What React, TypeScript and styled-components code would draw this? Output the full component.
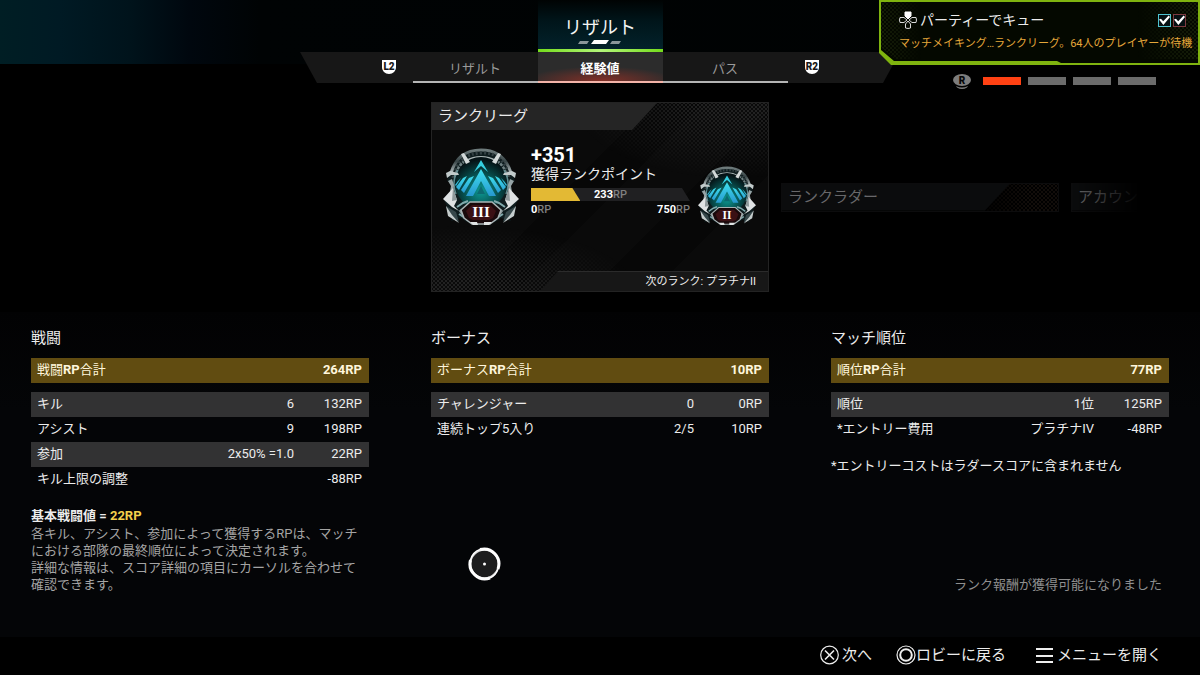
import React, { useState } from "react";
import styled, { createGlobalStyle, css } from "styled-components";

const GlobalStyle = createGlobalStyle`
  *, *::before, *::after { box-sizing: border-box; }
  body {
    margin: 0;
    background: #000;
    color: #ececec;
    font-family: Roboto, "Noto Sans CJK JP", sans-serif;
    font-size: 13px;
    line-height: 18px;
  }
  button {
    margin: 0;
    padding: 0;
    border: 0;
    background: none;
    color: inherit;
    font: inherit;
    cursor: pointer;
  }
  h1, h2, p { margin: 0; font-weight: 400; }
  svg { display: block; }
`;

const halftone = (color: string) => css`
  background-image: radial-gradient(circle, ${color} 1px, transparent 1px),
    radial-gradient(circle, ${color} 1px, transparent 1px);
  background-size: 4px 4px;
  background-position: 0 0, 2px 2px;
`;

const Screen = styled.div`
  position: relative;
  display: flex;
  flex-direction: column;
  min-height: 100vh;
  overflow: hidden;
`;

/* ---------- header ---------- */

const Header = styled.header`
  display: grid;
  grid-template-columns: minmax(0, 1fr) 600px minmax(0, 1fr);
  min-height: 90px;
  background: linear-gradient(90deg, #001e24 0, #001a24 60px, #00131b 130px, #00070e 190px, #000304 260px, #000202 100%)
    top / 100% 64px no-repeat;
`;

const HeaderCentre = styled.div`
  grid-column: 2;
  display: flex;
  flex-direction: column;
  align-items: center;
`;

const TitleBlock = styled.div`
  display: flex;
  flex-direction: column;
  align-items: center;
  justify-content: flex-end;
  gap: 2px;
  width: 125px;
  height: 52px;
  background: linear-gradient(180deg, #000303 0, #00151a 40%, #03232c 100%);

  &::after {
    content: "";
    width: 100%;
    height: 3px;
    margin-top: 3px;
    background: linear-gradient(90deg, #74dc1c, #b4f47a 50%, #74dc1c);
  }
`;

const Title = styled.h1`
  font-size: 18px;
  line-height: 20px;
  color: #f4f4f4;
`;

const TabBar = styled.nav`
  display: flex;
  align-items: center;
  justify-content: center;
  gap: 16px;
  width: 100%;
  height: 31px;
  background: #171717;
  clip-path: polygon(0 0, 100% 0, calc(100% - 17px) 100%, 17px 100%);
`;

const Tabs = styled.div`
  display: flex;
  height: 100%;
`;

const Tab = styled.button<{ $active: boolean }>`
  width: 125px;
  padding-top: 4px;
  border-bottom: 2px solid ${(p) => (p.$active ? "#f3b3a8" : "#b4b4b4")};
  color: ${(p) => (p.$active ? "#fff" : "#9a9a9a")};
  font-weight: ${(p) => (p.$active ? 700 : 400)};
  background: ${(p) =>
    p.$active
      ? "radial-gradient(ellipse 60% 50% at 50% 100%, rgba(190, 50, 35, 0.6), transparent), #2c2c2c"
      : "none"};
`;

const Pager = styled.div`
  grid-column: 3;
  align-self: end;
  justify-self: end;
  display: flex;
  align-items: center;
  gap: 7px;
  height: 18px;
  padding-right: 44px;

  svg { margin-right: 5px; }
`;

const PagerBar = styled.button<{ $active: boolean }>`
  width: 38px;
  height: 8px;
  background: ${(p) => (p.$active ? "#ff4113" : "#6b6b6b")};
`;

/* ---------- queue notification ---------- */

const Toast = styled.aside`
  position: absolute;
  top: 0;
  right: 0;
  width: 321px;
  height: 65px;
  padding: 10px 0 0 20px;
  background: #7fb30f;
  clip-path: polygon(0 0, 100% 0, 100% 100%, 12px 100%, 0 calc(100% - 12px));
  isolation: isolate;

  &::before {
    content: "";
    position: absolute;
    inset: 0;
    z-index: -2;
    background: #040800;
    clip-path: polygon(
      2px 2px, calc(100% - 2px) 2px, calc(100% - 2px) calc(100% - 2px), 182px calc(100% - 2px),
      178px calc(100% - 4px), 15px calc(100% - 4px), 2px calc(100% - 15px)
    );
  }

  &::after {
    content: "";
    position: absolute;
    inset: 2px 2px 6px 2px;
    z-index: -1;
    ${halftone("#161e08")}
    mask-image: linear-gradient(90deg, #000, transparent 40px, transparent calc(100% - 60px), #000);
    clip-path: polygon(0 0, 100% 0, 100% 100%, 14px 100%, 0 calc(100% - 12px));
  }
`;

const ToastHead = styled.div`
  display: flex;
  align-items: center;
  gap: 3px;
  padding-right: 14px;
  font-size: 14px;
  line-height: 20px;
`;

const ToastChecks = styled.div`
  display: flex;
  gap: 2px;
  margin-left: auto;
`;

const Check = styled.input<{ $tone: string }>`
  appearance: none;
  width: 13px;
  height: 13px;
  margin: 0;
  border: 1px solid ${(p) => p.$tone};
  background: #061013;

  &:checked::before {
    content: "";
    display: block;
    width: 11px;
    height: 11px;
    background: #fff;
    clip-path: polygon(0 45%, 18% 38%, 38% 62%, 88% 8%, 100% 22%, 40% 96%);
  }
`;

const ToastText = styled.p`
  margin-top: 5px;
  font-size: 11px;
  line-height: 17px;
  color: #e5a73a;
  white-space: nowrap;
`;

/* ---------- cards ---------- */

const CardRow = styled.section`
  display: grid;
  grid-template-columns: minmax(0, 1fr) 338px minmax(0, 1fr);
  align-items: center;
  gap: 12px;
  padding: 12px 0 20px;
`;

const RankCard = styled.article`
  grid-column: 2;
  position: relative;
  isolation: isolate;
  display: flex;
  flex-direction: column;
  min-height: 190px;
  border: 1px solid #232323;
  background: linear-gradient(135deg, transparent 42%, #070707 42%, #070707 52%, transparent 52%, transparent 66%, #070707 66%, #070707 78%, transparent 78%), #0a0a0a;

  &::before,
  &::after {
    content: "";
    position: absolute;
    inset: 0;
    z-index: -1;
    ${halftone("#222")}
    mask-image: radial-gradient(ellipse 160px 75px at 90% 0, #000 20%, transparent);
  }
  &::after {
    mask-image: radial-gradient(ellipse 170px 65px at 10% 100%, #000 20%, transparent);
  }
`;

const CardTitle = styled.h2`
  width: 225px;
  padding: 0 6px;
  font-size: 15px;
  line-height: 27px;
  background: #252525;
  clip-path: polygon(0 0, 100% 0, calc(100% - 25px) 100%, 0 100%);
`;

const RankBody = styled.div`
  display: flex;
  align-items: flex-end;
  padding: 15px 12px 0 11px;
`;

const RankInfo = styled.div`
  flex: 1;
  margin: 0 8px 0 12px;
  padding-bottom: 10px;
`;

const Gained = styled.div`
  font-size: 20px;
  font-weight: 700;
  line-height: 20px;
  color: #fff;
`;

const GainedLabel = styled.div`
  font-size: 14px;
  line-height: 18px;
  white-space: nowrap;
`;

const Track = styled.div`
  display: grid;
  height: 13px;
  margin-top: 5px;
  background: #202022;
  clip-path: polygon(0 0, calc(100% - 8px) 0, 100% 100%, 0 100%);

  & > * { grid-area: 1 / 1; }
`;

const Fill = styled.div`
  background: #e3b934;
  clip-path: polygon(0 0, calc(100% - 8px) 0, 100% 100%, 0 100%);
`;

const Points = styled.span`
  justify-self: center;
  font-size: 11px;
  font-weight: 700;
  line-height: 13px;
  color: #fff;

  small {
    font-size: 11px;
    font-weight: 500;
    color: #808080;
  }
`;

const Bounds = styled.div`
  display: flex;
  justify-content: space-between;
  padding-top: 2px;
  line-height: 14px;
`;

const NextRank = styled.div`
  align-self: flex-end;
  width: 228px;
  margin-top: auto;
  padding: 1px 12px 0 0;
  border-top: 1px solid #2b2b2b;
  background: #171717;
  font-size: 11px;
  line-height: 18px;
  text-align: right;
  clip-path: polygon(18px 0, 100% 0, 100% 100%, 0 100%);
`;

const SideCards = styled.div`
  display: flex;
  gap: 12px;
  margin-right: 60px;
  overflow: hidden;
  mask-image: linear-gradient(90deg, #000 calc(100% - 70px), transparent);
`;

const SideCard = styled.article`
  position: relative;
  flex: none;
  width: 278px;
  border: 1px solid #0c0c0d;

  &::before {
    content: "";
    position: absolute;
    inset: 0;
    ${halftone("#120d0a")}
    mask-image: linear-gradient(90deg, transparent 70%, #000 90%);
  }
`;

const SideTitle = styled.h2`
  position: relative;
  width: 228px;
  padding: 0 6px;
  background: #0b0c0d;
  color: #68686a;
  font-size: 15px;
  line-height: 27px;
  white-space: nowrap;
  clip-path: polygon(0 0, 100% 0, calc(100% - 25px) 100%, 0 100%);
`;

/* ---------- score tables ---------- */

const Scores = styled.main`
  flex: 1;
  display: grid;
  grid-template-columns: repeat(3, minmax(0, 1fr));
  align-content: start;
  gap: 62px;
  padding: 15px 31px 43px;
  background: linear-gradient(180deg, #020203, #040507 30%, #040507);
`;

const Column = styled.section`
  display: flex;
  flex-direction: column;
`;

const ColumnTitle = styled.h2`
  margin-bottom: 9px;
  font-size: 15px;
  line-height: 22px;
`;

const ScoreTable = styled.table`
  width: 100%;
  border-spacing: 0;
  line-height: 23px;

  th, td { padding: 0 0 2px; white-space: nowrap; }
  th { padding-left: 6px; font-weight: 400; text-align: left; }
  td { text-align: right; }
  td:last-child { width: 75px; padding-right: 7px; }
`;

const TotalRow = styled.tr`
  th, td {
    border-bottom: 9px solid transparent;
    background: #614c11;
    background-clip: padding-box;
    color: #fff6dc;
  }
  td { font-weight: 700; }
`;

const ScoreRow = styled.tr<{ $shaded: boolean }>`
  background: ${(p) => (p.$shaded ? "#323233" : "transparent")};
`;

const Note = styled.div`
  margin-top: 15px;
  line-height: 18px;
`;

const BaseValue = styled.p`
  font-weight: 700;

  em {
    color: #f3d04c;
    font-style: normal;
  }
`;

const Explanation = styled.p`
  color: #a4a4a4;
  line-height: 17px;
  white-space: nowrap;
`;

const RewardNotice = styled.p`
  margin-top: auto;
  padding-right: 7px;
  color: #8f8f8f;
  line-height: 17px;
  text-align: right;
`;

const Pointer = styled.div`
  position: absolute;
  left: 468px;
  top: 547px;
  pointer-events: none;
`;

/* ---------- footer ---------- */

const Footer = styled.footer`
  display: flex;
  justify-content: flex-end;
  gap: 24px;
  height: 38px;
  padding: 0 38px 2px 0;
  background: #000;
`;

const Action = styled.button`
  display: flex;
  align-items: center;
  font-size: 15px;
  line-height: 22px;
`;

/* ---------- drawings ---------- */

const Trigger = ({ label }: { label: string }) => (
  <svg width="16" height="15" viewBox="0 0 16 15" role="img" aria-label={label}>
    <path d="M1 0H15V7C15 11 12 14 8 14S1 11 1 7Z" fill="#fff" />
    <text x="8" y="10" textAnchor="middle" fontSize="10" fontWeight="900" fill="#171717">
      {label}
    </text>
  </svg>
);

const Slashes = () => (
  <svg width="44" height="4" viewBox="0 0 44 4" aria-hidden="true">
    <path d="M2 1H11L9 4H0Z M34 1H43L41 4H32Z" fill="#8a9699" />
    <path d="M16 0H31L28 4H13Z" fill="#fff" />
  </svg>
);

const StickIcon = () => (
  <svg width="18" height="15" viewBox="0 0 18 15" role="img" aria-label="R">
    <ellipse cx="9" cy="6" rx="9" ry="6" fill="#7d7d7d" />
    <path d="M3 12Q9 15 15 12L14 13.500Q9 16.500 4 13.500Z" fill="#7d7d7d" />
    <text x="9" y="9.500" textAnchor="middle" fontSize="10" fontWeight="900" fill="#060606">
      R
    </text>
  </svg>
);

const DPadIcon = () => (
  <svg width="18" height="18" viewBox="0 0 18 18" aria-hidden="true" fill="none" stroke="#d8d8d8" strokeWidth="1">
    <path d="M6 1H12V5L9 8L6 5Z" fill="#fff" stroke="#fff" />
    <path d="M1 6.500H5L8 9L5 11.500H1Q0 9 1 6.500Z" />
    <path d="M17 6.500H13L10 9L13 11.500H17Q18 9 17 6.500Z" />
    <path d="M6.500 17V13L9 10L11.500 13V17Q9 18 6.500 17Z" />
  </svg>
);

const RankBadge = ({ tier, size }: { tier: string; size: number }) => (
  <svg width={size} height={Math.round((size * 78) / 76)} viewBox="0 0 76 78" role="img" aria-label={`プラチナ${tier}`}>
    <defs>
      <radialGradient id={`core-${tier}`} cx="50%" cy="65%" r="60%">
        <stop offset="0" stopColor="#0c9a94" />
        <stop offset="0.550" stopColor="#07504f" />
        <stop offset="1" stopColor="#051316" />
      </radialGradient>
      <linearGradient id={`metal-${tier}`} x1="0" y1="0" x2="0" y2="1">
        <stop offset="0" stopColor="#6e7b7c" />
        <stop offset="0.500" stopColor="#3a4648" />
        <stop offset="1" stopColor="#b9c2c3" />
      </linearGradient>
      <linearGradient id={`ice-${tier}`} x1="0" y1="0" x2="0" y2="1">
        <stop offset="0" stopColor="#3fe0ee" />
        <stop offset="1" stopColor="#2798d0" />
      </linearGradient>
    </defs>
    {/* outer shell */}
    <path d="M6 27Q12 1 38 1T70 27L72 33L66 36L68 46L75 52L70 62L64 66L68 73L58 70L52 74L38 77L24 74L18 70L8 73L12 66L6 62L1 52L8 46L10 36L4 33Z" fill="#0e1c1e" />
    <path d="M8 25Q15 2 38 2T68 25" fill="none" stroke={`url(#metal-${tier})`} strokeWidth="3" />
    <path d="M10 30Q14 6 38 5T66 30" fill="none" stroke="#334043" strokeWidth="3" strokeDasharray="2 2" />
    <path d="M23 13Q30 9 38 9T53 13" fill="none" stroke="#a9b5b5" strokeWidth="2" />
    <path d="M12 29Q15 18 21 14M64 29Q61 18 55 14" fill="none" stroke="#6f8082" strokeWidth="3" strokeDasharray="3 1" />
    <circle cx="38" cy="35" r="26" fill={`url(#core-${tier})`} />
    <path d="M13 46A27 27 0 0 1 15 22M63 46A27 27 0 0 0 61 22" fill="none" stroke="#5f8c90" strokeWidth="1.500" />
    {/* clasps */}
    <path d="M18 6L21 5L27 14L23 16ZM58 6L55 5L49 14L53 16Z" fill="#d3d9d9" />
    <path d="M3 25L7 23L15 25L16 27L8 27L4 30ZM73 25L69 23L61 25L60 27L68 27L72 30Z" fill="#c2cbcb" />
    <path d="M5 33L9 31L11 37L10 46L7 44L8 38ZM71 33L67 31L65 37L66 46L69 44L68 38Z" fill="#96a4a6" />
    {/* side plates */}
    <path d="M0 51L10 40L14 52L11 58L16 63L9 59ZM76 51L66 40L62 52L65 58L60 63L67 59Z" fill="#dfe2e3" />
    <path d="M10 40L14 52L9 53ZM66 40L62 52L67 53Z" fill="#8f999b" />
    <path d="M3 58L13 64L16 74L6 68ZM73 58L63 64L60 74L70 68Z" fill="#36474a" />
    <path d="M3 58L9 67L16 75L5 68ZM73 58L67 67L60 75L71 68Z" fill="#c4cccc" />
    <path d="M14 59L20 55L25 53M62 59L56 55L51 53M16 66L22 70M60 66L54 70" stroke="#7fa9ac" strokeWidth="2" fill="none" />
    <path d="M17 62L21 68L26 72L38 74L50 72L55 68L59 62" stroke="#8b999b" strokeWidth="3" fill="none" />
    {/* peak emblem */}
    <path d="M38 12L45 24L38 18L31 24Z" fill="#35cfe0" />
    <path d="M38 21L53 48H46L38 33L30 48H23Z" fill={`url(#ice-${tier})`} />
    <path d="M38 38L42 46H34Z" fill="#0c6a70" />
    <path d="M26 30L31 28L21 45L18 42ZM20 30L24 28L16 42L13 39ZM15 33L18 30L13 38L12 37Z" fill={`url(#ice-${tier})`} />
    <path d="M50 30L45 28L55 45L58 42ZM56 30L52 28L60 42L63 39ZM61 33L58 30L63 38L64 37Z" fill={`url(#ice-${tier})`} />
    {/* tier plate */}
    <path d="M27 54H49L58 62L55 70L47 76H29L21 70L18 62Z" fill="#19090b" stroke="#a9b4b5" strokeWidth="1.500" />
    <path d="M29 57H47L53 63L50 70L46 72H30L26 70L23 63Z" fill="#3b1014" />
    <path d="M27 74H34L35 77H30ZM41 74H49L46 77H41Z" fill="#dfe3e3" />
    <text x="38" y="69" textAnchor="middle" fontFamily="'Liberation Serif', serif" fontSize="15" fontWeight="700" fill="#fff">
      {tier}
    </text>
  </svg>
);

const PointerIcon = () => (
  <svg width="33" height="34" viewBox="0 0 33 34" aria-hidden="true">
    <circle cx="16.500" cy="17" r="14" fill="#1d1d1e" stroke="#d8d8d8" strokeWidth="1.500" />
    <path d="M12 2.500A15 15 0 0 1 30 22M22 31A15 15 0 0 1 2.500 13" fill="none" stroke="#fff" strokeWidth="3" />
    <path d="M2.500 13A15 15 0 0 1 12 2.500M30 22A15 15 0 0 1 22 31" fill="none" stroke="#fff" strokeWidth="1.500" />
    <circle cx="16.500" cy="17" r="1.500" fill="#fff" />
  </svg>
);

const CrossIcon = () => (
  <svg width="22" height="20" viewBox="0 0 22 20" aria-hidden="true" fill="none" stroke="#eee">
    <circle cx="9.500" cy="10" r="8.800" strokeWidth="1.200" />
    <path d="M5 5.500L14 14.500M14 5.500L5 14.500" strokeWidth="1.600" />
  </svg>
);

const CircleIcon = () => (
  <svg width="20" height="20" viewBox="0 0 20 20" aria-hidden="true" fill="none" stroke="#eee">
    <circle cx="10" cy="10" r="9" strokeWidth="1.200" />
    <circle cx="10" cy="10" r="5.800" strokeWidth="2" />
  </svg>
);

const MenuIcon = () => (
  <svg width="27" height="20" viewBox="0 0 27 20" aria-hidden="true">
    <path d="M6 4H23M6 11H23M6 17H23" stroke="#eee" strokeWidth="2" />
  </svg>
);

/* ---------- data ---------- */

type Row = { label: string; detail?: string; rp: string };

const combat: Row[] = [
  { label: "キル", detail: "6", rp: "132RP" },
  { label: "アシスト", detail: "9", rp: "198RP" },
  { label: "参加", detail: "2x50% =1.0", rp: "22RP" },
  { label: "キル上限の調整", rp: "-88RP" },
];

const bonus: Row[] = [
  { label: "チャレンジャー", detail: "0", rp: "0RP" },
  { label: "連続トップ5入り", detail: "2/5", rp: "10RP" },
];

const placement: Row[] = [
  { label: "順位", detail: "1位", rp: "125RP" },
  { label: "*エントリー費用", detail: "プラチナIV", rp: "-48RP" },
];

const ScoreSection = ({
  title,
  name,
  total,
  rows,
  children,
}: {
  title: string;
  name: string;
  total: string;
  rows: Row[];
  children?: React.ReactNode;
}) => (
  <Column aria-label={title}>
    <ColumnTitle>{title}</ColumnTitle>
    <ScoreTable>
      <tbody>
        <TotalRow>
          <th scope="row">
            {name}
            <b>RP</b>合計
          </th>
          <td />
          <td>{total}</td>
        </TotalRow>
        {rows.map((row, i) => (
          <ScoreRow key={row.label} $shaded={i % 2 === 0}>
            <th scope="row">{row.label}</th>
            <td>{row.detail}</td>
            <td>{row.rp}</td>
          </ScoreRow>
        ))}
      </tbody>
    </ScoreTable>
    {children}
  </Column>
);

const RP = ({ value }: { value: number }) => (
  <Points>
    {value}
    <small>RP</small>
  </Points>
);

const tabs = ["リザルト", "経験値", "パス"];

export default function App() {
  const [tab, setTab] = useState(1);
  const [page, setPage] = useState(0);
  const points = 233;
  const goal = 750;

  return (
    <Screen>
      <GlobalStyle />
      <Header>
        <HeaderCentre>
          <TitleBlock>
            <Title>リザルト</Title>
            <Slashes />
          </TitleBlock>
          <TabBar>
            <Trigger label="L2" />
            <Tabs>
              {tabs.map((name, i) => (
                <Tab key={name} $active={i === tab} onClick={() => setTab(i)}>
                  {name}
                </Tab>
              ))}
            </Tabs>
            <Trigger label="R2" />
          </TabBar>
        </HeaderCentre>
        <Pager>
          <StickIcon />
          {[0, 1, 2, 3].map((i) => (
            <PagerBar key={i} $active={i === page} aria-label={`ページ${i + 1}`} onClick={() => setPage(i)} />
          ))}
        </Pager>
      </Header>

      <CardRow>
        <RankCard>
          <CardTitle>ランクリーグ</CardTitle>
          <RankBody>
            <RankBadge tier="III" size={76} />
            <RankInfo>
              <Gained>+351</Gained>
              <GainedLabel>獲得ランクポイント</GainedLabel>
              <Track>
                <Fill style={{ width: `${(points / goal) * 100}%` }} />
                <RP value={points} />
              </Track>
              <Bounds>
                <RP value={0} />
                <RP value={goal} />
              </Bounds>
            </RankInfo>
            <RankBadge tier="II" size={58} />
          </RankBody>
          <NextRank>次のランク: プラチナII</NextRank>
        </RankCard>
        <SideCards>
          <SideCard>
            <SideTitle>ランクラダー</SideTitle>
          </SideCard>
          <SideCard>
            <SideTitle>アカウン</SideTitle>
          </SideCard>
        </SideCards>
      </CardRow>

      <Scores>
        <ScoreSection title="戦闘" name="戦闘" total="264RP" rows={combat}>
          <Note>
            <BaseValue>
              基本戦闘値 = <em>22RP</em>
            </BaseValue>
            <Explanation>
              各キル、アシスト、参加によって獲得するRPは、マッチ
              <br />
              における部隊の最終順位によって決定されます。
              <br />
              詳細な情報は、スコア詳細の項目にカーソルを合わせて
              <br />
              確認できます。
            </Explanation>
          </Note>
        </ScoreSection>
        <ScoreSection title="ボーナス" name="ボーナス" total="10RP" rows={bonus} />
        <ScoreSection title="マッチ順位" name="順位" total="77RP" rows={placement}>
          <Note>*エントリーコストはラダースコアに含まれません</Note>
          <RewardNotice>ランク報酬が獲得可能になりました</RewardNotice>
        </ScoreSection>
      </Scores>

      <Footer>
        <Action>
          <CrossIcon />
          次へ
        </Action>
        <Action>
          <CircleIcon />
          ロビーに戻る
        </Action>
        <Action>
          <MenuIcon />
          メニューを開く
        </Action>
      </Footer>

      <Toast>
        <ToastHead>
          <DPadIcon />
          パーティーでキュー
          <ToastChecks>
            <Check type="checkbox" defaultChecked $tone="#4fc3d0" aria-label="プレイヤー1" />
            <Check type="checkbox" defaultChecked $tone="#7c3a40" aria-label="プレイヤー2" />
          </ToastChecks>
        </ToastHead>
        <ToastText>マッチメイキング…ランクリーグ。64人のプレイヤーが待機</ToastText>
      </Toast>

      <Pointer>
        <PointerIcon />
      </Pointer>
    </Screen>
  );
}
